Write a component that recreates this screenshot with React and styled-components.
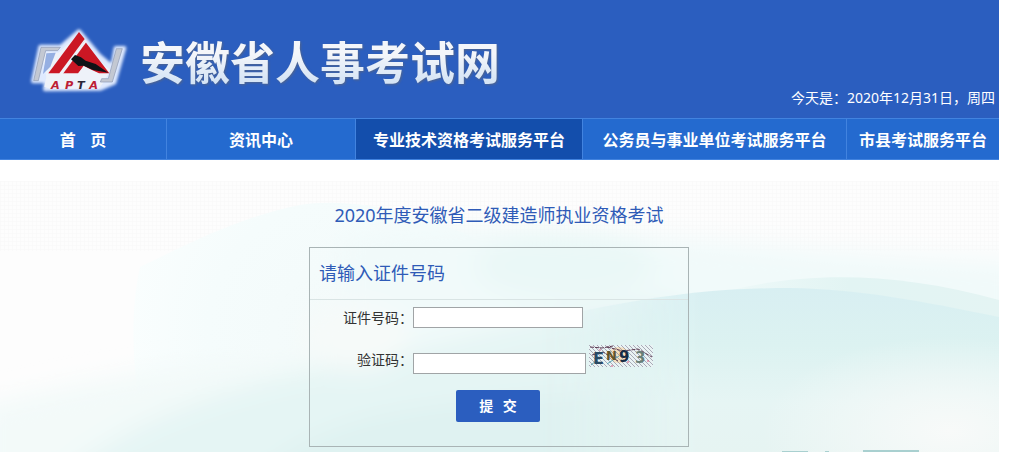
import React, { useState } from "react";
import styled, { createGlobalStyle } from "styled-components";

const menus = [
    { id: 1, name: "首\u00a0\u00a0\u00a0\u00a0页" },
    { id: 2, name: "资讯中心" },
    { id: 3, name: "专业技术资格考试服务平台" },
    { id: 4, name: "公务员与事业单位考试服务平台" },
    { id: 5, name: "市县考试服务平台" },
];

const Logo = () => (
    <StLogo viewBox="0 0 315 240" role="img" aria-label="APTA">
        <defs>
            <filter id="glow" x="-20%" y="-20%" width="140%" height="140%">
                <feGaussianBlur stdDeviation="5" />
            </filter>
        </defs>
        <g fill="#dfeaff" stroke="#dfeaff" strokeWidth="12" strokeLinejoin="round" filter="url(#glow)">
            <path d="M46 80H108L162 34L222 106L262 140L272 84H298L268 188L226 206L60 208L64 184H24Z" />
        </g>
        <path d="M50 98H100L162 42L230 128L256 150L236 186L222 206H76L58 200L64 170Z" fill="#eef2f9" />
        <path d="M64 100L92 98L76 140L54 162Z" fill="#6f93d8" opacity="0.7" />
        <path d="M48 82H106L98 92H62L40 182H26Z" fill="#c3c8d2" stroke="#8d99b3" strokeWidth="2" />
        <path d="M274 86H292L262 186H226L230 176H250Z" fill="#c3c8d2" stroke="#8d99b3" strokeWidth="2" />
        <path d="M162 36L179 57L103 160H70Z" fill="#cb1724" />
        <path d="M179 63L253 160H222L196 148L176 137L160 160H112Z" fill="#cb1724" />
        <path d="M183 62L109 162" stroke="#eef2f9" strokeWidth="7" />
        <path d="M158 161L174 143L222 161Z" fill="#eef2f9" />
        <path d="M138 118L150 105L168 112L182 122L212 132L250 158L204 150L176 137L160 138Z" fill="#101216" />
        <g
            fontFamily="DejaVu Sans, sans-serif"
            fontSize="34"
            fontWeight="700"
            fontStyle="italic"
            fill="#bd1e35"
        >
            <text x="78" y="206">A</text>
            <text x="120" y="206">P</text>
            <text x="156" y="206" fill="#2b2638">T</text>
            <text x="193" y="206">A</text>
        </g>
    </StLogo>
);

const Scenery = () => (
    <StScenery viewBox="0 0 999 271" preserveAspectRatio="none" aria-hidden="true">
        <defs>
            <filter id="soft" x="-10%" y="-20%" width="120%" height="140%">
                <feGaussianBlur stdDeviation="12" />
            </filter>
            <radialGradient id="leftHill" gradientUnits="userSpaceOnUse" cx="340" cy="150" r="220">
                <stop offset="0" stopColor="#f3fafa" />
                <stop offset="0.6" stopColor="#f5fcfc" />
                <stop offset="1" stopColor="#fafefe" />
            </radialGradient>
            <linearGradient id="backHill" x1="0" y1="0" x2="1" y2="0">
                <stop offset="0" stopColor="#e2f4f3" stopOpacity="0" />
                <stop offset="0.5" stopColor="#e2f4f3" />
                <stop offset="1" stopColor="#e4f4f3" />
            </linearGradient>
            <linearGradient id="frontHill" x1="0" y1="0" x2="0" y2="1">
                <stop offset="0" stopColor="#d8eff2" />
                <stop offset="0.35" stopColor="#dcf2f1" />
                <stop offset="0.7" stopColor="#e6f5f4" />
                <stop offset="1" stopColor="#e6f4f2" />
            </linearGradient>
            <linearGradient id="fadeIn" x1="0" y1="0" x2="1" y2="0">
                <stop offset="0" stopColor="#fff" stopOpacity="0" />
                <stop offset="0.35" stopColor="#fff" />
                <stop offset="1" stopColor="#fff" />
            </linearGradient>
            <mask id="fade">
                <rect x="540" width="459" height="271" fill="url(#fadeIn)" />
            </mask>
            <radialGradient id="mist">
                <stop offset="0" stopColor="#f8faf9" />
                <stop offset="1" stopColor="#f8faf9" stopOpacity="0" />
            </radialGradient>
            <pattern id="mesh" width="4" height="4" patternUnits="userSpaceOnUse">
                <path d="M0 0H4M0 0V4" stroke="#f8f8f8" strokeWidth="1" />
            </pattern>
        </defs>
        <rect width="999" height="271" fill="#fdfdfd" />
        <rect width="999" height="70" fill="url(#mesh)" />
        <path d="M140 86C190 62 240 36 300 24C350 16 420 30 480 60V271H150C130 200 130 130 140 86Z" fill="url(#leftHill)" />
        <g filter="url(#soft)">
            <path d="M340 60C500 20 700 70 1020 80V290H340Z" fill="#f1fafa" />
            <path d="M-20 225C120 190 230 175 330 180V300H-20Z" fill="#f3faf9" />
            <path d="M70 290C160 220 260 200 360 180C470 160 560 125 680 120V300H70Z" fill="#e5f5f4" />
            <path d="M250 300C320 230 420 225 520 215L720 200V300Z" fill="#dff2f1" />
            <ellipse cx="565" cy="85" rx="90" ry="35" fill="#eaf8f7" />
            <ellipse cx="355" cy="155" rx="55" ry="35" fill="#f6faf9" />
        </g>
        <path d="M700 118C780 92 880 86 999 119V271H700Z" fill="url(#backHill)" />
        <path d="M540 140C640 116 710 107 790 107C860 108 920 120 999 136V271H540Z" fill="url(#frontHill)" mask="url(#fade)" />
        <ellipse cx="950" cy="250" rx="190" ry="95" fill="url(#mist)" />
        <path d="M782 270H808V271H782ZM825 270H829V271H825ZM863 269H919V271H863Z" fill="#a9d0d0" />
    </StScenery>
);

const Captcha = () => (
    <StCaptcha viewBox="0 0 64 22" role="img" aria-label="验证码图片">
        <defs>
            <pattern id="hatch" width="4" height="4" patternUnits="userSpaceOnUse">
                <path d="M-1 -1L5 5M-1 3L1 5M3 -1L5 1" stroke="#8e8b9e" strokeWidth="0.7" />
            </pattern>
        </defs>
        <rect width="64" height="22" fill="#e9f3f4" />
        <ellipse cx="30" cy="10" rx="10" ry="8" fill="#f4dfbe" />
        <rect width="64" height="22" fill="url(#hatch)" />
        <path d="M1 2L13 3L24 1M18 2L34 6L49 4L63 12M3 10L14 7L29 16" fill="none" stroke="#5b3850" strokeWidth="1" strokeDasharray="4 1" />
        <path d="M2 20L12 12M18 19L30 11" stroke="#58a4b5" strokeWidth="1" />
        <path d="M10 5h2M38 17h2M52 7h2M58 16h2M22 21h2" stroke="#d65880" strokeWidth="1" />
        <g fontFamily="DejaVu Sans, sans-serif" fontWeight="700">
            <text x="4" y="19" fontSize="16" fill="#294963">E</text>
            <text x="17" y="15" fontSize="13" fill="#62542b">N</text>
            <text x="30" y="17" fontSize="15" fill="#182d45">9</text>
            <text x="46" y="18" fontSize="15" fill="#688078">3</text>
        </g>
    </StCaptcha>
);

const App = () => {
    const [idNumber, setIdNumber] = useState("");
    const [code, setCode] = useState("");

    return (
        <>
            <GlobalStyle />
            <StPage>
                <StHeader>
                    <StBrand>
                        <Logo />
                        <StSiteName>安徽省人事考试网</StSiteName>
                    </StBrand>
                    <StDate>今天是：2020年12月31日，周四</StDate>
                </StHeader>
                <StNav>
                    {menus.map((menu) => (
                        <StNavLink key={menu.id} href="#" $active={menu.id === 3}>
                            {menu.name}
                        </StNavLink>
                    ))}
                </StNav>
                <StMain>
                    <Scenery />
                    <StTitle>2020年度安徽省二级建造师执业资格考试</StTitle>
                    <StForm onSubmit={(e) => e.preventDefault()}>
                        <StFormTitle>请输入证件号码</StFormTitle>
                        <StRow>
                            <StLabel htmlFor="idNumber">证件号码：</StLabel>
                            <StInput
                                id="idNumber"
                                $width={170}
                                value={idNumber}
                                onChange={(e) => setIdNumber(e.target.value)}
                            />
                        </StRow>
                        <StCodeRow>
                            <StLabel htmlFor="code">验证码：</StLabel>
                            <StInput
                                id="code"
                                $width={173}
                                value={code}
                                onChange={(e) => setCode(e.target.value)}
                            />
                            <Captcha />
                        </StCodeRow>
                        <StButton type="submit">提&nbsp;&nbsp;&nbsp;交</StButton>
                    </StForm>
                </StMain>
            </StPage>
        </>
    );
};

export default App;

const GlobalStyle = createGlobalStyle`
    * {
        box-sizing: border-box;
    }
    body {
        margin: 0;
        background: #fff;
        font-family: "Noto Sans", "Noto Sans CJK SC", sans-serif;
        font-size: 14px;
        color: #333;
    }
`

const StPage = styled.div`
    padding-right: 13px;
`

const StHeader = styled.header`
    display: flex;
    justify-content: space-between;
    align-items: flex-end;
    height: 118px;
    padding: 0 4px 0 25px;
    background: #2b5ebf;
`

const StBrand = styled.div`
    display: flex;
    align-items: center;
    gap: 10px;
    padding-bottom: 18px;
`

const StLogo = styled.svg`
    width: 105px;
    height: 80px;
`

const StSiteName = styled.h1`
    margin: 0;
    padding-top: 2px;
    font-family: "Noto Sans CJK SC", sans-serif;
    font-size: 45px;
    line-height: 60px;
    font-weight: 700;
    color: transparent;
    background: linear-gradient(#f4f6fa 40%, #d5e4f5 85%);
    background-clip: text;
    filter: drop-shadow(1px 1px 1px #50648c);
`

const StDate = styled.div`
    padding-bottom: 10px;
    line-height: 20px;
    color: #fff;
`

const StNav = styled.nav`
    display: grid;
    grid-template-columns: 167fr 189fr 227fr 264fr 152fr;
    border-top: 1px solid #4283df;
    border-bottom: 1px solid #4283df;
    background: #246acf;
`

const StNavLink = styled.a`
    height: 40px;
    line-height: 40px;
    text-align: center;
    white-space: nowrap;
    font-family: "Noto Sans CJK SC", sans-serif;
    font-size: 16px;
    font-weight: 700;
    color: #fff;
    text-decoration: none;
    background: ${(props) => (props.$active ? "#134eac" : "transparent")};
    border-right: 1px solid #4283df;
    &:last-child {
        border-right: none;
    }
`

const StMain = styled.main`
    position: relative;
    isolation: isolate;
    display: flex;
    flex-direction: column;
    align-items: center;
    margin-top: 21px;
    padding: 20px 1px 5px 0;
`

const StScenery = styled.svg`
    position: absolute;
    inset: 0;
    z-index: -1;
    width: 100%;
    height: 100%;
`

const StTitle = styled.h2`
    margin: 0 0 18px;
    font-size: 18px;
    line-height: 28px;
    font-weight: 400;
    color: #2f5bb7;
`

const StForm = styled.form`
    display: flex;
    flex-direction: column;
    width: 380px;
    height: 200px;
    border: 1px solid #a9b4b5;
`

const StFormTitle = styled.h3`
    margin: 0 0 7px;
    padding: 0 9px;
    font-size: 18px;
    line-height: 51px;
    font-weight: 400;
    color: #2f5bb7;
    border-bottom: 1px solid #d9e4e4;
`

const StRow = styled.div`
    display: flex;
    align-items: center;
    height: 21px;
`

const StCodeRow = styled.div`
    display: flex;
    align-items: flex-end;
    height: 29px;
    margin: 17px 0 16px;
`

const StLabel = styled.label`
    align-self: center;
    width: 103px;
    text-align: right;
    line-height: 20px;
`

const StInput = styled.input`
    width: ${(props) => props.$width}px;
    height: 21px;
    padding: 0 4px;
    border: 1px solid #a0a4a6;
    background: #fff;
    font: inherit;
`

const StCaptcha = styled.svg`
    align-self: flex-start;
    width: 64px;
    height: 22px;
    margin-left: 3px;
`

const StButton = styled.button`
    width: 84px;
    height: 32px;
    padding: 0 0 2px;
    margin-left: 146px;
    border: none;
    border-radius: 2px;
    background: #2b5ebf;
    color: #fff;
    font-family: "Noto Sans CJK SC", sans-serif;
    font-size: 14px;
    font-weight: 700;
    cursor: pointer;
`
